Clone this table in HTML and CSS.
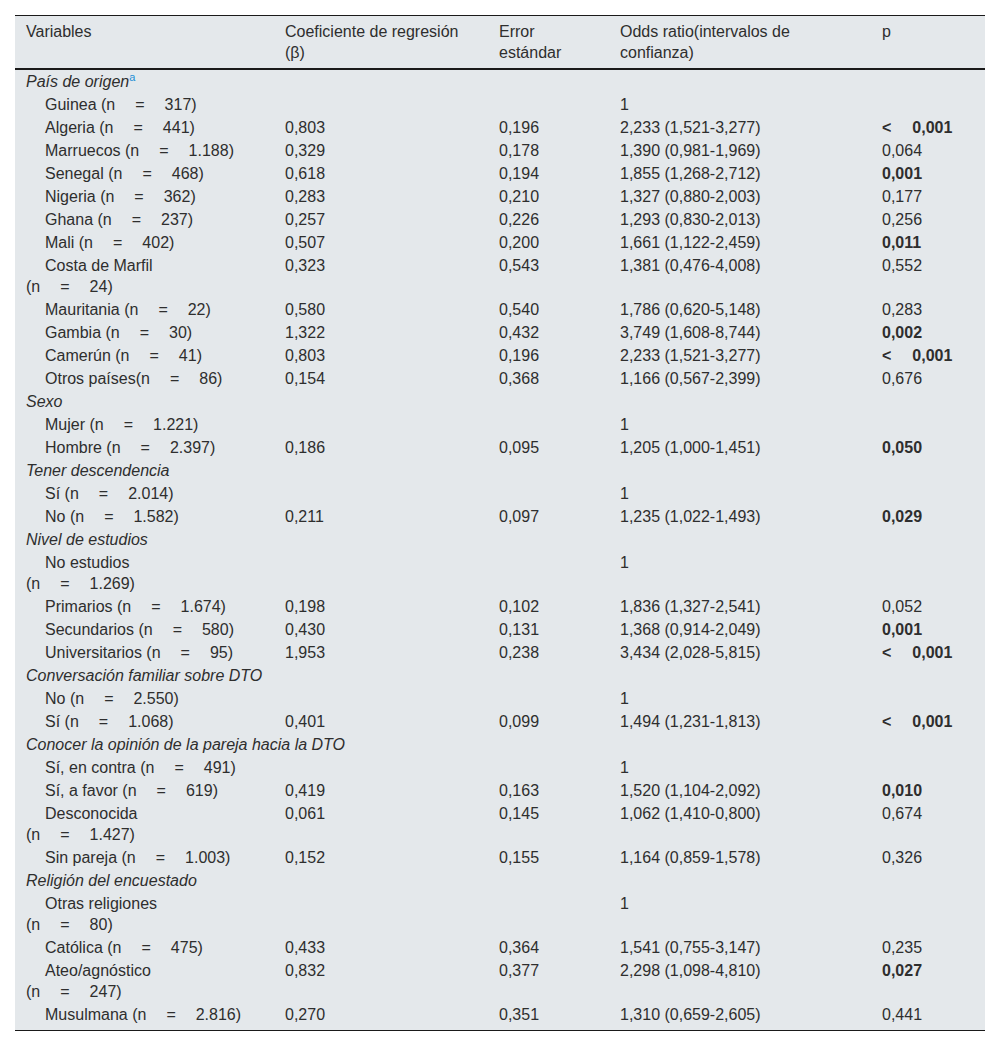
FILE: index.html
```html
<!DOCTYPE html>
<html lang="es">
<head>
<meta charset="utf-8">
<title>Tabla</title>
<link rel="stylesheet" href="styles.css">
</head>
<body>
<table class="tbl">
<colgroup>
<col class="c1"><col class="c2"><col class="c3"><col class="c4"><col class="c5">
</colgroup>
<thead>
<tr><th>Variables</th><th>Coeficiente de regresión (β)</th><th>Error estándar</th><th>Odds ratio(intervalos de confianza)</th><th>p</th></tr>
</thead>
<tbody>
<tr><td class="cat">País de origen<sup class="ref">a</sup></td><td></td><td></td><td></td><td></td></tr>
<tr><td class="sub">Guinea (n<span class="eq">=</span>317)</td><td></td><td></td><td>1</td><td></td></tr>
<tr><td class="sub">Algeria (n<span class="eq">=</span>441)</td><td>0,803</td><td>0,196</td><td>2,233 (1,521-3,277)</td><td class="b"><span class="lt">&lt;</span>0,001</td></tr>
<tr><td class="sub">Marruecos (n<span class="eq">=</span>1.188)</td><td>0,329</td><td>0,178</td><td>1,390 (0,981-1,969)</td><td>0,064</td></tr>
<tr><td class="sub">Senegal (n<span class="eq">=</span>468)</td><td>0,618</td><td>0,194</td><td>1,855 (1,268-2,712)</td><td class="b">0,001</td></tr>
<tr><td class="sub">Nigeria (n<span class="eq">=</span>362)</td><td>0,283</td><td>0,210</td><td>1,327 (0,880-2,003)</td><td>0,177</td></tr>
<tr><td class="sub">Ghana (n<span class="eq">=</span>237)</td><td>0,257</td><td>0,226</td><td>1,293 (0,830-2,013)</td><td>0,256</td></tr>
<tr><td class="sub">Mali (n<span class="eq">=</span>402)</td><td>0,507</td><td>0,200</td><td>1,661 (1,122-2,459)</td><td class="b">0,011</td></tr>
<tr><td class="sub">Costa de Marfil<br>(n<span class="eq">=</span>24)</td><td>0,323</td><td>0,543</td><td>1,381 (0,476-4,008)</td><td>0,552</td></tr>
<tr><td class="sub">Mauritania (n<span class="eq">=</span>22)</td><td>0,580</td><td>0,540</td><td>1,786 (0,620-5,148)</td><td>0,283</td></tr>
<tr><td class="sub">Gambia (n<span class="eq">=</span>30)</td><td>1,322</td><td>0,432</td><td>3,749 (1,608-8,744)</td><td class="b">0,002</td></tr>
<tr><td class="sub">Camerún (n<span class="eq">=</span>41)</td><td>0,803</td><td>0,196</td><td>2,233 (1,521-3,277)</td><td class="b"><span class="lt">&lt;</span>0,001</td></tr>
<tr><td class="sub">Otros países(n<span class="eq">=</span>86)</td><td>0,154</td><td>0,368</td><td>1,166 (0,567-2,399)</td><td>0,676</td></tr>
<tr><td class="cat">Sexo</td><td></td><td></td><td></td><td></td></tr>
<tr><td class="sub">Mujer (n<span class="eq">=</span>1.221)</td><td></td><td></td><td>1</td><td></td></tr>
<tr><td class="sub">Hombre (n<span class="eq">=</span>2.397)</td><td>0,186</td><td>0,095</td><td>1,205 (1,000-1,451)</td><td class="b">0,050</td></tr>
<tr><td class="cat">Tener descendencia</td><td></td><td></td><td></td><td></td></tr>
<tr><td class="sub">Sí (n<span class="eq">=</span>2.014)</td><td></td><td></td><td>1</td><td></td></tr>
<tr><td class="sub">No (n<span class="eq">=</span>1.582)</td><td>0,211</td><td>0,097</td><td>1,235 (1,022-1,493)</td><td class="b">0,029</td></tr>
<tr><td class="cat">Nivel de estudios</td><td></td><td></td><td></td><td></td></tr>
<tr><td class="sub">No estudios<br>(n<span class="eq">=</span>1.269)</td><td></td><td></td><td>1</td><td></td></tr>
<tr><td class="sub">Primarios (n<span class="eq">=</span>1.674)</td><td>0,198</td><td>0,102</td><td>1,836 (1,327-2,541)</td><td>0,052</td></tr>
<tr><td class="sub">Secundarios (n<span class="eq">=</span>580)</td><td>0,430</td><td>0,131</td><td>1,368 (0,914-2,049)</td><td class="b">0,001</td></tr>
<tr><td class="sub">Universitarios (n<span class="eq">=</span>95)</td><td>1,953</td><td>0,238</td><td>3,434 (2,028-5,815)</td><td class="b"><span class="lt">&lt;</span>0,001</td></tr>
<tr><td class="cat">Conversación familiar sobre DTO</td><td></td><td></td><td></td><td></td></tr>
<tr><td class="sub">No (n<span class="eq">=</span>2.550)</td><td></td><td></td><td>1</td><td></td></tr>
<tr><td class="sub">Sí (n<span class="eq">=</span>1.068)</td><td>0,401</td><td>0,099</td><td>1,494 (1,231-1,813)</td><td class="b"><span class="lt">&lt;</span>0,001</td></tr>
<tr><td class="cat wide" colspan="3">Conocer la opinión de la pareja hacia la DTO</td><td></td><td></td></tr>
<tr><td class="sub">Sí, en contra (n<span class="eq">=</span>491)</td><td></td><td></td><td>1</td><td></td></tr>
<tr><td class="sub">Sí, a favor (n<span class="eq">=</span>619)</td><td>0,419</td><td>0,163</td><td>1,520 (1,104-2,092)</td><td class="b">0,010</td></tr>
<tr><td class="sub">Desconocida<br>(n<span class="eq">=</span>1.427)</td><td>0,061</td><td>0,145</td><td>1,062 (1,410-0,800)</td><td>0,674</td></tr>
<tr><td class="sub">Sin pareja (n<span class="eq">=</span>1.003)</td><td>0,152</td><td>0,155</td><td>1,164 (0,859-1,578)</td><td>0,326</td></tr>
<tr><td class="cat">Religión del encuestado</td><td></td><td></td><td></td><td></td></tr>
<tr><td class="sub">Otras religiones<br>(n<span class="eq">=</span>80)</td><td></td><td></td><td>1</td><td></td></tr>
<tr><td class="sub">Católica (n<span class="eq">=</span>475)</td><td>0,433</td><td>0,364</td><td>1,541 (0,755-3,147)</td><td>0,235</td></tr>
<tr><td class="sub">Ateo/agnóstico<br>(n<span class="eq">=</span>247)</td><td>0,832</td><td>0,377</td><td>2,298 (1,098-4,810)</td><td class="b">0,027</td></tr>
<tr class="last"><td class="sub">Musulmana (n<span class="eq">=</span>2.816)</td><td>0,270</td><td>0,351</td><td>1,310 (0,659-2,605)</td><td>0,441</td></tr>
</tbody>
</table>
</body>
</html>
```
FILE: styles.css
```css
html, body {
  margin: 0;
  padding: 0;
  background: #ffffff;
}
body {
  padding: 15px 15px 0 15px;
  font-family: "Liberation Sans", Arial, sans-serif;
  font-size: 16px;
  color: #2e2e2e;
}
.tbl {
  width: 970px;
  border-collapse: collapse;
  table-layout: fixed;
  background: #e4e8eb;
  border-top: 1px solid #1a1a1a;
  border-bottom: 1px solid #1a1a1a;
}
.c1 { width: 259px; }
.c2 { width: 214px; }
.c3 { width: 121px; }
.c4 { width: 262px; }
.c5 { width: 114px; }
.tbl th {
  font-weight: normal;
  text-align: left;
  vertical-align: top;
  line-height: 21px;
  padding: 5px 9px 5px 11px;
  border-bottom: 2px solid #1a1a1a;
}
.tbl td {
  vertical-align: top;
  line-height: 21px;
  padding: 1px 9px 1px 11px;
  white-space: nowrap;
}
.tbl td.cat {
  font-style: italic;
}
.tbl td.sub {
  text-indent: 19px;
}
.tbl td.b {
  font-weight: bold;
}
.tbl tr.last td {
  padding-bottom: 5px;
}
.eq {
  display: inline-block;
  text-indent: 0;
  margin: 0 20px 0 20px;
}
.lt {
  display: inline-block;
  margin-right: 21px;
}
.ref {
  color: #1d8fd6;
  font-size: 11px;
  font-style: normal;
  line-height: 0;
  vertical-align: 6px;
}
```
